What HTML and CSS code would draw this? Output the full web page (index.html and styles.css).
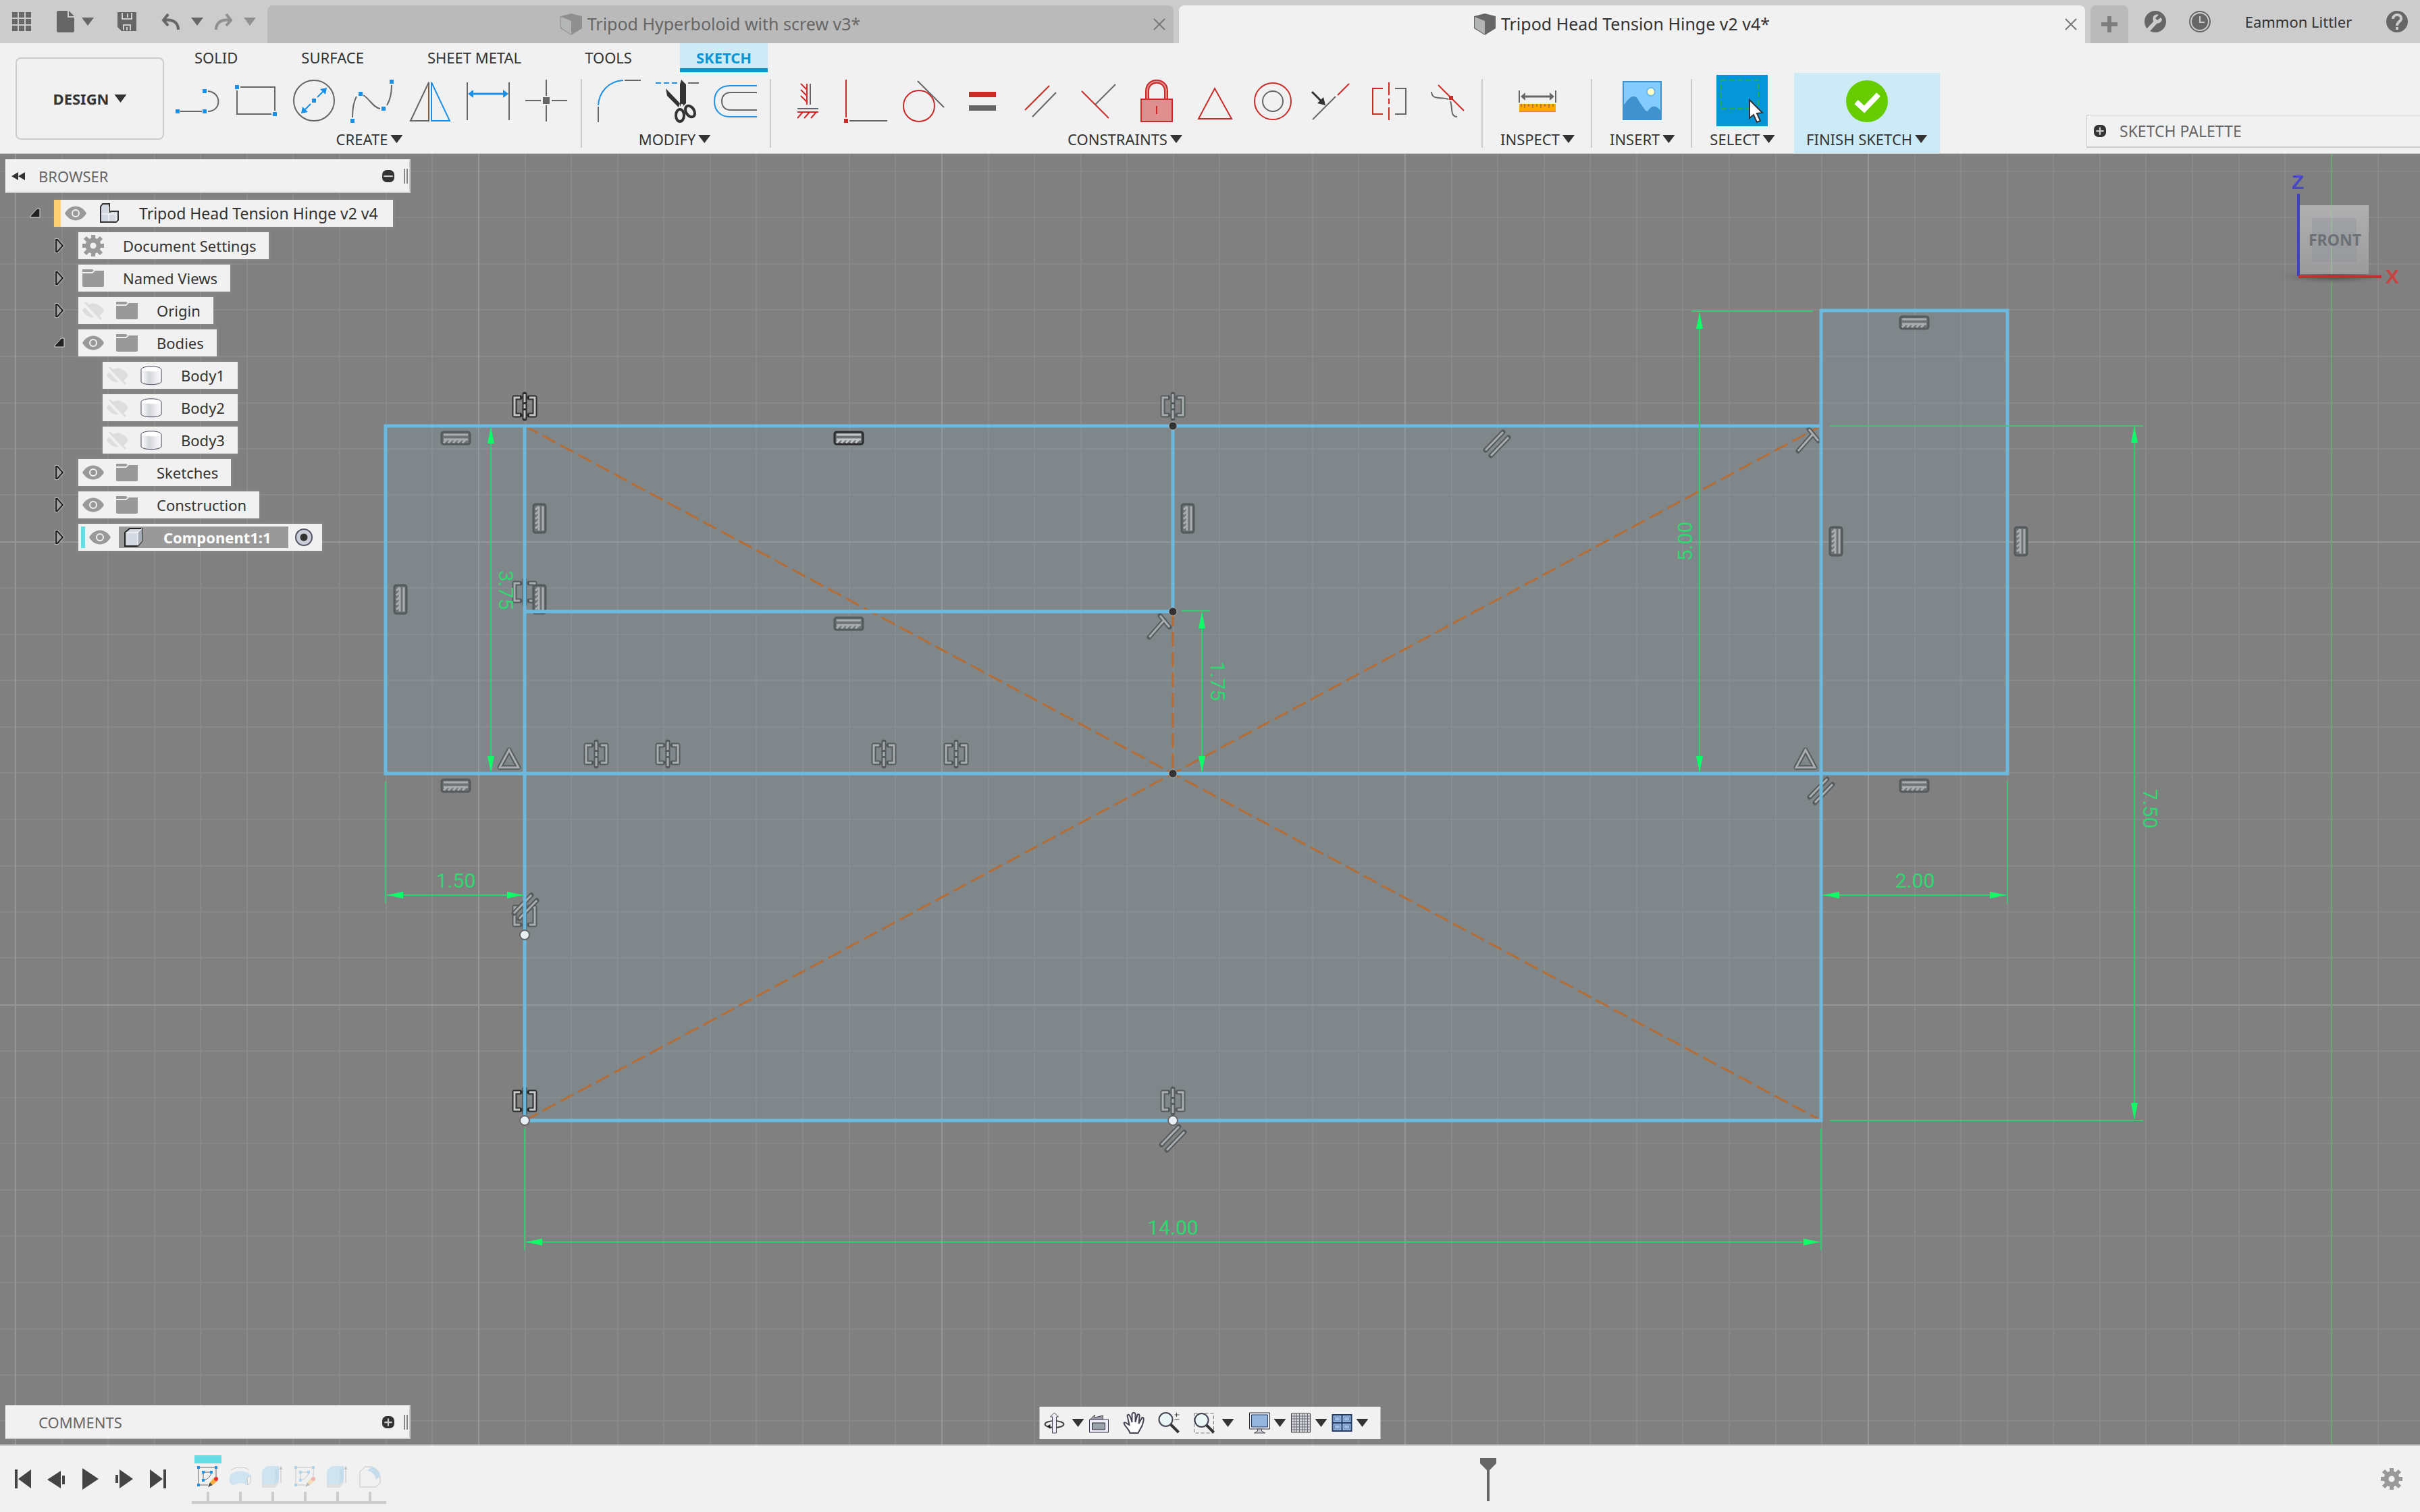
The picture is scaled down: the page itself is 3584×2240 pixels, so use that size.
FILE: index.html
```html
<!DOCTYPE html>
<html lang="en">
<head>
  <meta charset="UTF-8">
  <meta name="viewport" content="width=device-width, initial-scale=1.0">
  <title>Tripod Head Tension Hinge v2 v4*</title>
  <link rel="stylesheet" href="styles.css">
</head>
<body>
  <!-- shared icons -->
  <svg class="sprite" width="0" height="0" aria-hidden="true">
    <defs>
      <symbol id="i-eye" viewBox="0 0 32 32">
        <path d="M0 16C8 2 24 2 32 16C24 30 8 30 0 16Z" fill="#999"/>
        <circle cx="16" cy="16" r="5" fill="none" stroke="#f1f1f1" stroke-width="2"/>
      </symbol>
      <symbol id="i-eye-off" viewBox="0 0 32 32">
        <path d="M0 16C8 2 24 2 32 16C24 30 8 30 0 16Z" fill="#ddd"/>
        <path d="M2 5L26 31" stroke="#f1f1f1" stroke-width="6"/>
        <path d="M4 4L28 29" stroke="#ddd" stroke-width="3"/>
      </symbol>
      <symbol id="i-folder" viewBox="0 0 32 32">
        <path d="M0 3H15L17 5L14 7H0ZM0 9H15L19 5H32V27Q32 29 30 29H2Q0 29 0 27Z" fill="#999"/>
      </symbol>
      <symbol id="i-gear" viewBox="0 0 32 32">
        <g fill="none" stroke="currentColor">
          <circle cx="16" cy="16" r="8" stroke-width="7"/>
          <path d="M16 0V6M16 26V32M0 16H6M26 16H32M4 4L9 9M23 23L28 28M28 4L23 9M9 23L4 28" stroke-width="6"/>
        </g>
      </symbol>
      <symbol id="i-body" viewBox="0 0 32 32">
        <path d="M1 8V26C5 31 27 31 31 26V8Z" fill="url(#metal)" stroke="#445" stroke-width="1"/>
        <path d="M1 8C1 1 31 1 31 8C31 11 1 11 1 8Z" fill="#fff"/>
        <path d="M1 8C1 1 31 1 31 8" fill="none" stroke="#445" stroke-width="1"/>
      </symbol>
      <symbol id="i-component" viewBox="0 0 32 32">
        <path d="M3 9L10 3H28V22L22 29H3Z" fill="#d5d9e2" stroke="#222" stroke-width="2"/>
        <path d="M22 9L28 3V22L22 29Z" fill="#a9aebb"/>
        <path d="M4 9H22V28M22 9L28 3" fill="none" stroke="#fff" stroke-width="1"/>
      </symbol>
      <symbol id="i-closed" viewBox="0 0 24 24">
        <path d="M7 3H9L17 12L9 21H7Z" fill="none" stroke="#bbb" stroke-width="4"/>
        <path d="M7 3H9L17 12L9 21H7Z" fill="#a0a0a0" stroke="#222" stroke-width="2"/>
      </symbol>
      <symbol id="i-open" viewBox="0 0 24 24">
        <path d="M5 18V16L15 5H19V18Z" fill="#222" stroke="#ddd" stroke-width="1"/>
      </symbol>
      <symbol id="i-doc" viewBox="0 0 32 32">
        <path d="M0 4L16 0L32 4V22L16 32L0 22Z" fill="#666"/>
        <path d="M1 5L16 11V31L1 21Z" fill="#b2b4b4"/>
      </symbol>
      <symbol id="i-plus" viewBox="0 0 16 16">
        <rect width="16" height="16" rx="6" fill="#333"/>
        <path d="M8 3V13M3 8H13" stroke="#ccc" stroke-width="2"/>
      </symbol>
      <symbol id="i-minus" viewBox="0 0 16 16">
        <rect width="16" height="16" rx="6" fill="#333"/>
        <path d="M2 8H14" stroke="#ccc" stroke-width="2"/>
      </symbol>
      <symbol id="i-sketch" viewBox="0 0 32 32">
        <path d="M2 2H28V20M2 2V28H16" fill="none" stroke="#666" stroke-width="1"/>
        <path d="M9 9H21C21 14 16 20 9 21Z" fill="none" stroke="#666" stroke-width="1"/>
        <path d="M0 0h4v4h-4zM26 0h4v4h-4zM0 26h4v4h-4zM7 7h4v4h-4zM19 7h4v4h-4zM7 19h4v4h-4z" fill="#1a90e6"/>
        <path d="M16 31L19 24L23 28Z" fill="#444"/>
        <path d="M19 24L25 17L30 22L23 28Z" fill="#f5ae3d"/>
        <circle cx="28" cy="19" r="3" fill="#f03030"/>
      </symbol>
      <symbol id="i-extrude" viewBox="0 0 32 32">
        <path d="M0 27H19L25 21V25L19 32H0Z" fill="#bbb"/>
        <path d="M0 6L7 0H25V21L19 27H0Z" fill="#86c5ee"/>
        <path d="M19 6L25 0V21L19 27Z" fill="#62aee2"/>
        <path d="M28 26V3" stroke="#666" stroke-width="1"/>
        <path d="M28 0L31 5H25Z" fill="#666"/>
      </symbol>

      <!-- constraint glyphs on the canvas, each centred on 0,0 -->
      <g id="g-sym">
        <path class="rim" d="M-7 -13H-15V13H-7M7 -13H15V13H7M0 -18V18"/>
        <path class="ink" d="M-7 -13H-15V13H-7M7 -13H15V13H7"/>
        <path class="ink" d="M0 -18V18" stroke-dasharray="12 3 6 3"/>
      </g>
      <g id="g-hor">
        <rect class="plate" x="-21" y="-9" width="42" height="18" rx="3"/>
        <path class="ink" d="M-18 -5H18M-18 2H18M-18 7L-13 2M-11 7L-6 2M-4 7L1 2M3 7L8 2M10 7L15 2"/>
      </g>
      <g id="g-ver">
        <rect class="plate" x="-9" y="-21" width="18" height="42" rx="3"/>
        <path class="ink" d="M5 -18V18M-1 -18V18M-6 -13L-1 -18M-6 -6L-1 -11M-6 1L-1 -4M-6 8L-1 3M-6 15L-1 10"/>
      </g>
      <g id="g-par">
        <path class="rim" d="M-17 10L9 -17M-9 18L17 -9"/>
        <path class="ink" d="M-17 10L9 -17M-9 18L17 -9"/>
      </g>
      <g id="g-perp">
        <path class="rim" d="M-14 16L8 -9M2 -16L16 1"/>
        <path class="ink" d="M-14 16L8 -9M2 -16L16 1"/>
      </g>
      <g id="g-tri">
        <path class="rim" d="M-14 13L0 -13L14 13Z"/>
        <path class="ink" d="M-14 13L0 -13L14 13Z"/>
      </g>

      <linearGradient id="metal">
        <stop offset="0" stop-color="#fff"/><stop offset=".4" stop-color="#d4d6dc"/><stop offset="1" stop-color="#fff"/>
      </linearGradient>
      <linearGradient id="cube-face" x2="0" y2="1">
        <stop offset="0" stop-color="#b0b0b0"/><stop offset="1" stop-color="#9b9b9b"/>
      </linearGradient>
      <radialGradient id="cube-shadow">
        <stop offset="0" stop-color="#444"/><stop offset="1" stop-color="#808080" stop-opacity="0"/>
      </radialGradient>
      <pattern id="grid" x="22" y="116" width="686" height="686" patternUnits="userSpaceOnUse">
        <path d="M70 0V686M138 0V686M207 0V686M275 0V686M344 0V686M412 0V686M481 0V686M550 0V686M618 0V686M0 69H686M0 138H686M0 206H686M0 275H686M0 343H686M0 412H686M0 481H686M0 549H686M0 617H686" stroke="#898989" stroke-width="2"/>
        <path d="M1 0V686M0 1H686" stroke="#979797" stroke-width="2"/>
      </pattern>
      <marker id="arrow" viewBox="0 0 24 10" refX="24" refY="5" markerWidth="24" markerHeight="10" markerUnits="userSpaceOnUse" orient="auto-start-reverse">
        <path d="M0 0L24 5L0 10Z" fill="#0dff68"/>
      </marker>
    </defs>
  </svg>

  <header class="titlebar">
    <div class="quick">
      <button aria-label="Data panel"><svg viewBox="0 0 32 32"><path d="M2 2h8v8H2zM12 2h8v8h-8zM22 2h8v8h-8zM2 12h8v8H2zM12 12h8v8h-8zM22 12h8v8h-8zM2 22h8v8H2zM12 22h8v8h-8zM22 22h8v8h-8z" fill="#666"/></svg></button>
      <div class="pair">
        <button aria-label="File"><svg viewBox="0 0 32 32"><path d="M5 0H19V10H29V30Q29 32 27 32H5Q3 32 3 30V2Q3 0 5 0ZM21 0L29 8H21Z" fill="#666"/></svg></button>
        <span class="caret mid"></span>
      </div>
      <button aria-label="Save"><svg viewBox="0 0 32 32"><path d="M2 2H30V30H8L2 24Z" fill="#666"/><path d="M9 3V12H23V3M17 4V10M11 29V21H21V29M16 24V29" fill="none" stroke="#ccc" stroke-width="2"/></svg></button>
      <div class="pair history">
        <button aria-label="Undo"><svg viewBox="0 0 32 32"><path d="M12 5L5 14L12 22M6 14C20 12 27 18 27 28" fill="none" stroke="#666" stroke-width="4"/></svg></button>
        <span class="caret mid"></span>
        <button aria-label="Redo" disabled><svg viewBox="0 0 32 32"><path d="M20 5L27 14L20 22M26 14C12 12 5 18 5 28" fill="none" stroke="#909090" stroke-width="4"/></svg></button>
        <span class="caret light"></span>
      </div>
    </div>
    <div class="doc-tabs">
      <div class="doc-tab">
        <span class="doc-name"><svg class="faded" viewBox="0 0 32 32"><use href="#i-doc"/></svg>Tripod Hyperboloid with screw v3*</span>
        <button class="close" aria-label="Close tab"><svg viewBox="0 0 18 18"><path d="M1 1L17 17M17 1L1 17"/></svg></button>
      </div>
      <div class="doc-tab active">
        <span class="doc-name"><svg viewBox="0 0 32 32"><use href="#i-doc"/></svg>Tripod Head Tension Hinge v2 v4*</span>
        <button class="close" aria-label="Close tab"><svg viewBox="0 0 18 18"><path d="M1 1L17 17M17 1L1 17"/></svg></button>
      </div>
      <button class="new-tab" aria-label="New design"><svg viewBox="0 0 24 24"><path d="M12 0V24M0 12H24" stroke="#7d7d7d" stroke-width="6"/></svg></button>
    </div>
    <div class="account">
      <button aria-label="Extensions"><svg viewBox="0 0 32 32"><circle cx="16" cy="16" r="16" fill="#666"/><path d="M5 29L18 15" stroke="#ccc" stroke-width="6"/><path d="M24 10L19 14L16 11L21 6C14 4 11 10 13 15C16 20 24 20 26 13Z" fill="#ccc"/></svg></button>
      <button aria-label="Job status"><svg viewBox="0 0 32 32"><circle cx="16" cy="16" r="15" fill="none" stroke="#666" stroke-width="2"/><circle cx="16" cy="16" r="12" fill="#666"/><path d="M16 8V17H23" fill="none" stroke="#ccc" stroke-width="2"/></svg></button>
      <a class="user" href="#account">Eammon Littler</a>
      <button aria-label="Help"><svg viewBox="0 0 32 32"><circle cx="16" cy="16" r="16" fill="#666"/><path d="M10 12C10 4 23 4 22 12C22 16 16 16 16 22" fill="none" stroke="#ccc" stroke-width="4"/><path d="M14 24h4v4h-4z" fill="#ccc"/></svg></button>
    </div>
  </header>

  <div class="ribbon">
    <button class="workspace">DESIGN <span class="caret"></span></button>
    <div class="ribbon-main">
      <nav class="ribbon-tabs">
        <a href="#solid">SOLID</a>
        <a href="#surface">SURFACE</a>
        <a href="#sheet-metal">SHEET METAL</a>
        <a href="#tools">TOOLS</a>
        <a href="#sketch" class="active">SKETCH</a>
      </nav>
      <div class="groups">
        <section class="group">
          <div class="tools">
            <button aria-label="Line"><svg viewBox="0 0 64 64"><path class="gr" d="M6 48H38M47 18C68 20 67 48 47 48"/><path class="bf" d="M-1 45h6v6h-6zM39 45h6v6h-6zM39 15h6v6h-6z"/></svg></button>
            <button aria-label="Rectangle"><svg viewBox="0 0 64 64"><path class="gr" d="M9 12H60V47M4 17V52H55"/><path class="bf" d="M1 9h6v6h-6zM57 49h6v6h-6z"/></svg></button>
            <button aria-label="Circle"><svg viewBox="0 0 64 64"><circle class="gr" cx="32" cy="32" r="30"/><path class="bl" d="M37 27L46 18M27 37L18 46"/><path class="bf" d="M29 29h6v6h-6zM51 13L49 23L41 15ZM13 51L15 41L23 49Z"/></svg></button>
            <button aria-label="Spline"><svg viewBox="0 0 64 64"><path class="gr" d="M3 57C3 42 5 33 9 26M19 24C28 29 34 43 44 44M54 39C60 29 61 19 61 9"/><path class="bf" d="M0 59h6v6h-6zM12 19h6v6h-6zM46 41h6v6h-6zM58 1h6v6h-6z"/></svg></button>
            <button aria-label="Mirror"><svg viewBox="0 0 64 64"><path class="gr" d="M30 5V62H3Z"/><path class="bl" d="M34 5V62H61Z"/></svg></button>
            <button aria-label="Dimension"><svg viewBox="0 0 64 64"><path class="gr" d="M1 5V61M63 5V61"/><path class="bl thick" d="M8 22H56"/><path class="bf" d="M2 22L10 16V28ZM62 22L54 16V28Z"/></svg></button>
            <button aria-label="Point"><svg viewBox="0 0 64 64"><path class="gr" d="M1 32H24M40 32H63M32 1V25M32 39V63"/><path class="gf" d="M27 27h10v10h-10z"/></svg></button>
          </div>
          <button class="group-label">CREATE <span class="caret"></span></button>
        </section>
        <section class="group">
          <div class="tools">
            <button aria-label="Fillet"><svg viewBox="0 0 64 64"><path class="bl" d="M1 39C2 20 16 3 38 2"/><path class="gr" d="M40 2H64M1 41V64"/></svg></button>
            <button aria-label="Trim"><svg viewBox="0 0 64 64"><path class="bl" d="M0 6H32" stroke-dasharray="8 4"/><path class="gr" d="M48 6H64"/><path d="M38 1L45 8V36L40 41L36 40V8ZM15 14L36 36L34 42L17 25Z" fill="#333"/><ellipse cx="36" cy="54" rx="6" ry="9" fill="none" stroke="#333" stroke-width="4"/><ellipse cx="51" cy="48" rx="6" ry="9" transform="rotate(-32 51 48)" fill="none" stroke="#333" stroke-width="4"/><circle cx="39" cy="39" r="2" fill="#fff"/></svg></button>
            <button aria-label="Offset"><svg viewBox="0 0 64 64"><path class="bl" d="M64 10H24C9 10 1 20 1 33S9 56 24 56H64"/><path class="gr" d="M64 20H25C17 20 12 25 12 33S17 46 25 46H64"/></svg></button>
          </div>
          <button class="group-label">MODIFY <span class="caret"></span></button>
        </section>
        <section class="group">
          <div class="tools">
            <button aria-label="Horizontal/Vertical"><svg viewBox="0 0 64 64"><path class="rd" d="M30 7V38M21 7L30 16M21 16L30 25M21 25L30 34M16 49H47M16 58L24 49M26 58L34 49M36 58L44 49"/><path class="gr" d="M35 7V38M16 44H47"/></svg></button>
            <button aria-label="Coincident"><svg viewBox="0 0 64 64"><path class="rd" d="M2 1V57"/><path class="gr" d="M7 62H63"/><path class="rf" d="M-1 59h6v6h-6z"/></svg></button>
            <button aria-label="Tangent"><svg viewBox="0 0 64 64"><circle class="rd" cx="24" cy="40" r="23"/><path class="gr" d="M22 3L61 42"/></svg></button>
            <button aria-label="Equal"><svg viewBox="0 0 64 64"><path class="rf" d="M12 19h40v8h-40z"/><path class="gf" d="M12 39h40v8h-40z"/></svg></button>
            <button aria-label="Parallel"><svg viewBox="0 0 64 64"><path class="rd" d="M9 46L45 10"/><path class="gr" d="M20 56L55 20"/></svg></button>
            <button aria-label="Perpendicular"><svg viewBox="0 0 64 64"><path class="rd" d="M7 18L47 58"/><path class="gr" d="M27 38L57 8"/></svg></button>
            <button aria-label="Fix"><svg viewBox="0 0 64 64"><path d="M18 30V18C18 -1 46 -1 46 18V30" fill="none" stroke="#cc2927" stroke-width="6"/><path d="M18 30V18C18 -1 46 -1 46 18V30" fill="none" stroke="#df8f8f" stroke-width="2"/><path d="M9 30H55V63H9Z" fill="#df8f8f" stroke="#cc2927" stroke-width="2"/><path class="rd" d="M32 40V52"/></svg></button>
            <button aria-label="Equal length"><svg viewBox="0 0 64 64"><path class="rd" d="M8 59L32 14L57 59Z"/></svg></button>
            <button aria-label="Concentric"><svg viewBox="0 0 64 64"><circle class="rd" cx="32" cy="33" r="27"/><circle class="gr" cx="32" cy="33" r="15"/></svg></button>
            <button aria-label="Collinear"><svg viewBox="0 0 64 64"><path class="gr" d="M5 60L39 26"/><path class="rd" d="M42 24L59 7"/><path d="M4 19L18 33" stroke="#333" stroke-width="3"/><path d="M24 39L12 36L21 27Z" fill="#333"/></svg></button>
            <button aria-label="Symmetry"><svg viewBox="0 0 64 64"><path class="rd" d="M23 14H8V52H23M32 5V24M32 29V37M32 42V61"/><path class="gr" d="M41 14H57V52H41"/></svg></button>
            <button aria-label="Curvature"><svg viewBox="0 0 64 64"><path class="gr" d="M9 19C10 32 22 26 34 30M37 33C41 44 36 55 47 56"/><path class="rd" d="M19 9L57 47"/><path class="rf" d="M35 25h6v6h-6z"/></svg></button>
          </div>
          <button class="group-label">CONSTRAINTS <span class="caret"></span></button>
        </section>
        <section class="group single">
          <div class="tools">
            <button aria-label="Measure"><svg viewBox="0 0 64 64"><path class="gr" d="M5 17V35M59 17V35"/><path class="gr thick" d="M10 26H54"/><path class="gf" d="M7 26L14 20V32ZM57 26L50 20V32Z"/><path d="M5 37H59V49H5Z" fill="#ffa900"/><path d="M5 47H59V49H5Z" fill="#e09000"/><path d="M8 37V41M13 37V43M19 37V41M25 37V43M31 37V41M37 37V43M43 37V41M49 37V43M55 37V41" stroke="#665533" stroke-width="1"/></svg></button>
          </div>
          <button class="group-label">INSPECT <span class="caret"></span></button>
        </section>
        <section class="group single">
          <div class="tools">
            <button aria-label="Insert image"><svg viewBox="0 0 64 64"><path d="M4 4H60V60H4Z" fill="#84cbff" stroke="#3f92cd" stroke-width="2"/><path d="M4 40C15 22 23 22 28 34L37 47L40 48C46 38 53 38 60 48V61H4Z" fill="#3f92cd"/><circle cx="45" cy="19" r="6" fill="#ffffc8" stroke="#6eb9ee" stroke-width="2"/></svg></button>
          </div>
          <button class="group-label">INSERT <span class="caret"></span></button>
        </section>
        <section class="group single last">
          <div class="tools">
            <button class="selected" aria-label="Select"><svg viewBox="0 0 64 64"><path d="M1 2H56V44H1Z" fill="none" stroke="#1fae55" stroke-width="2" stroke-dasharray="8 4"/><path d="M43 31V58L49 53L54 64L59 62L54 51L62 50Z" fill="#fff" stroke="#333" stroke-width="2"/></svg></button>
          </div>
          <button class="group-label">SELECT <span class="caret"></span></button>
        </section>
        <section class="group finish">
          <div class="tools">
            <button aria-label="Finish sketch"><svg viewBox="0 0 64 64"><circle cx="32" cy="33" r="31" fill="#6c0"/><path d="M16 34L28 45L49 23" fill="none" stroke="#fff" stroke-width="8"/></svg></button>
          </div>
          <button class="group-label">FINISH SKETCH <span class="caret"></span></button>
        </section>
      </div>
    </div>
    <aside class="palette">
      <button aria-label="Expand sketch palette"><svg viewBox="0 0 16 16"><use href="#i-plus"/></svg></button>
      SKETCH PALETTE
    </aside>
  </div>

  <main class="viewport">
    <svg class="canvas" viewBox="0 228 3584 1912" preserveAspectRatio="xMidYMid slice">
      <rect y="228" width="3584" height="1912" fill="#808080"/>
      <rect y="228" width="3584" height="1912" fill="url(#grid)"/>
      <path d="M3453 228V2140" stroke="#62a866" stroke-opacity=".7" stroke-width="2"/>

      <path d="M571 631H2697V460H2973V1146H2697V1660H777V1146H571Z" fill="#7aa0ae" fill-opacity=".22"/>

      <g class="construction">
        <path d="M777 631L1737 1146L2697 1660"/>
        <path d="M777 1660L1737 1146L2697 631"/>
        <path d="M1737 906V1146"/>
      </g>

      <g class="glyphs">
        <use href="#g-sym" x="1737" y="602"/>
        <use href="#g-sym" x="883" y="1117"/>
        <use href="#g-sym" x="989" y="1117"/>
        <use href="#g-sym" x="1309" y="1117"/>
        <use href="#g-sym" x="1416" y="1117"/>
        <use href="#g-sym" x="777" y="877"/>
        <use href="#g-sym" x="777" y="1357"/>
        <use href="#g-sym" x="1737" y="1631"/>
        <use href="#g-hor" x="675" y="649"/>
        <use href="#g-hor" x="675" y="1164"/>
        <use href="#g-hor" x="1257" y="924"/>
        <use href="#g-hor" x="2835" y="478"/>
        <use href="#g-hor" x="2835" y="1164"/>
        <use href="#g-ver" x="593" y="888"/>
        <use href="#g-ver" x="799" y="768"/>
        <use href="#g-ver" x="799" y="888"/>
        <use href="#g-ver" x="1759" y="768"/>
        <use href="#g-ver" x="2719" y="802"/>
        <use href="#g-ver" x="2993" y="802"/>
        <use href="#g-par" x="2217" y="657"/>
        <use href="#g-par" x="2697" y="1171"/>
        <use href="#g-par" x="1737" y="1686"/>
        <use href="#g-par" x="778" y="1343"/>
        <use href="#g-perp" x="1716" y="928"/>
        <use href="#g-perp" x="2677" y="652"/>
        <use href="#g-tri" x="754" y="1124"/>
        <use href="#g-tri" x="2674" y="1124"/>
      </g>
      <g class="glyphs strong">
        <use href="#g-sym" x="777" y="602"/>
        <use href="#g-sym" x="777" y="1631"/>
        <use href="#g-hor" x="1257" y="649"/>
      </g>

      <g class="profile">
        <path d="M777 631H571V1146H2973V460H2697V1660H777V631H2697"/>
        <path d="M777 906H1737V631"/>
      </g>

      <g class="extension">
        <path d="M571 1158V1338M2973 1158V1338M777 1672V1852M2697 1672V1852"/>
        <path d="M1750 905H1792M2505 461H2685M2710 631H3174M2710 1660H3174"/>
      </g>
      <g class="dimension">
        <path d="M727 633V1144"/>
        <path d="M1780 907V1144"/>
        <path d="M2517 463V1144"/>
        <path d="M3161 632V1658"/>
        <path d="M573 1326H775"/>
        <path d="M2700 1326H2971"/>
        <path d="M779 1840H2695"/>
      </g>
      <g class="dim-text">
        <text transform="translate(739 874) rotate(90)">3.75</text>
        <text transform="translate(1793 1009) rotate(90)">1.75</text>
        <text transform="translate(2506 802) rotate(-90)">5.00</text>
        <text transform="translate(3174 1198) rotate(90)">7.50</text>
        <text x="675" y="1315">1.50</text>
        <text x="2836" y="1315">2.00</text>
        <text x="1737" y="1829">14.00</text>
      </g>

      <g fill="#333" stroke="#aaa" stroke-width="1">
        <circle cx="1737" cy="631" r="6"/>
        <circle cx="1737" cy="906" r="6"/>
        <circle cx="1737" cy="1146" r="6"/>
      </g>
      <g fill="#e8eff4" stroke="#666" stroke-width="2">
        <circle cx="777" cy="1385" r="7"/>
        <circle cx="777" cy="1660" r="7"/>
        <circle cx="1737" cy="1660" r="7"/>
      </g>

      <!-- view cube -->
      <g class="viewcube">
        <ellipse cx="3456" cy="410" rx="90" ry="12" fill="url(#cube-shadow)"/>
        <rect x="3406" y="304" width="102" height="102" fill="url(#cube-face)"/>
        <rect x="3424" y="323" width="66" height="65" fill="#8c9098" fill-opacity=".35"/>
        <path d="M3453 304V406" stroke="#9cc29f" stroke-width="2" stroke-opacity=".6"/>
        <text class="face" x="3458" y="364">FRONT</text>
        <path d="M3404 287V409" stroke="#4141c4" stroke-width="4"/>
        <path d="M3404 410H3527" stroke="#c03030" stroke-width="4"/>
        <text x="3403" y="280" fill="#4848c4">Z</text>
        <text x="3543" y="420" fill="#c84444">X</text>
      </g>
    </svg>

    <div class="browser">
      <div class="panel-bar">
        <button aria-label="Collapse"><svg class="rewind" viewBox="0 0 20 16"><path d="M10 2V14L0 8ZM20 2V14L10 8Z" fill="#333"/></svg></button>
        <span class="panel-title">BROWSER</span>
        <button aria-label="Minimize"><svg class="dot" viewBox="0 0 16 16"><use href="#i-minus"/></svg></button>
        <span class="grip"></span>
      </div>
      <ul class="tree">
        <li class="lv1">
          <button class="toggle" aria-label="Collapse"><svg viewBox="0 0 24 24"><use href="#i-open"/></svg></button>
          <div class="node root">
            <svg viewBox="0 0 32 32"><use href="#i-eye"/></svg>
            <svg viewBox="0 0 32 32"><path d="M3 6L6 2H16V14L19 13H29V26L26 29H3Z" fill="#d5d9e2" stroke="#333" stroke-width="2"/><path d="M4 17H15V28M15 17H26V28M15 6V17" fill="none" stroke="#fff" stroke-width="1"/></svg>
            <span>Tripod Head Tension Hinge v2 v4</span>
          </div>
        </li>
        <li class="lv2">
          <button class="toggle" aria-label="Expand"><svg viewBox="0 0 24 24"><use href="#i-closed"/></svg></button>
          <div class="node"><svg class="gear" viewBox="0 0 32 32"><use href="#i-gear"/></svg><span>Document Settings</span></div>
        </li>
        <li class="lv2">
          <button class="toggle" aria-label="Expand"><svg viewBox="0 0 24 24"><use href="#i-closed"/></svg></button>
          <div class="node"><svg viewBox="0 0 32 32"><use href="#i-folder"/></svg><span>Named Views</span></div>
        </li>
        <li class="lv2">
          <button class="toggle" aria-label="Expand"><svg viewBox="0 0 24 24"><use href="#i-closed"/></svg></button>
          <div class="node"><svg viewBox="0 0 32 32"><use href="#i-eye-off"/></svg><svg viewBox="0 0 32 32"><use href="#i-folder"/></svg><span>Origin</span></div>
        </li>
        <li class="lv2">
          <button class="toggle" aria-label="Collapse"><svg viewBox="0 0 24 24"><use href="#i-open"/></svg></button>
          <div class="node"><svg viewBox="0 0 32 32"><use href="#i-eye"/></svg><svg viewBox="0 0 32 32"><use href="#i-folder"/></svg><span>Bodies</span></div>
        </li>
        <li class="lv3">
          <div class="node"><svg viewBox="0 0 32 32"><use href="#i-eye-off"/></svg><svg viewBox="0 0 32 32"><use href="#i-body"/></svg><span>Body1</span></div>
        </li>
        <li class="lv3">
          <div class="node"><svg viewBox="0 0 32 32"><use href="#i-eye-off"/></svg><svg viewBox="0 0 32 32"><use href="#i-body"/></svg><span>Body2</span></div>
        </li>
        <li class="lv3">
          <div class="node"><svg viewBox="0 0 32 32"><use href="#i-eye-off"/></svg><svg viewBox="0 0 32 32"><use href="#i-body"/></svg><span>Body3</span></div>
        </li>
        <li class="lv2">
          <button class="toggle" aria-label="Expand"><svg viewBox="0 0 24 24"><use href="#i-closed"/></svg></button>
          <div class="node"><svg viewBox="0 0 32 32"><use href="#i-eye"/></svg><svg viewBox="0 0 32 32"><use href="#i-folder"/></svg><span>Sketches</span></div>
        </li>
        <li class="lv2">
          <button class="toggle" aria-label="Expand"><svg viewBox="0 0 24 24"><use href="#i-closed"/></svg></button>
          <div class="node"><svg viewBox="0 0 32 32"><use href="#i-eye"/></svg><svg viewBox="0 0 32 32"><use href="#i-folder"/></svg><span>Construction</span></div>
        </li>
        <li class="lv2">
          <button class="toggle" aria-label="Expand"><svg viewBox="0 0 24 24"><use href="#i-closed"/></svg></button>
          <div class="node component">
            <svg viewBox="0 0 32 32"><use href="#i-eye"/></svg>
            <label class="picked" for="activate"><svg viewBox="0 0 32 32"><use href="#i-component"/></svg><span>Component1:1</span></label>
            <input type="radio" id="activate" name="active" checked>
          </div>
        </li>
      </ul>
    </div>

    <div class="comments panel-bar">
      <span class="panel-title">COMMENTS</span>
      <button aria-label="Expand comments"><svg class="dot" viewBox="0 0 16 16"><use href="#i-plus"/></svg></button>
      <span class="grip"></span>
    </div>

    <div class="navbar">
      <button class="drop" aria-label="Orbit"><svg viewBox="0 0 32 32"><ellipse cx="16" cy="18" rx="14" ry="5" fill="none" stroke="#444" stroke-width="2"/><path d="M13 31V7H10L16 1L22 7H19V31Z" fill="#eef" stroke="#444"/><path d="M5 21L10 18V25Z" fill="#222"/></svg></button>
      <span class="caret"></span>
      <button aria-label="Look at"><svg viewBox="0 0 32 32"><path d="M3 11L10 4V8L22 5V11" fill="#99a" stroke="#444"/><path d="M2 11H30V30H2Z" fill="#eef" stroke="#334"/><path d="M6 16H25V26H6Z" fill="#9aa2ab" stroke="#222"/></svg></button>
      <button aria-label="Pan"><svg viewBox="0 0 32 32"><path d="M10 31C8 24 1 20 1 16C4 14 6 18 9 19L6 5C8 2 10 4 13 15V3C14 0 17 0 18 3V15L21 4C23 2 25 4 24 7L23 17L28 8C31 8 31 10 28 20L22 31Z" fill="#fff" stroke="#445" stroke-width="2"/></svg></button>
      <button aria-label="Zoom"><svg viewBox="0 0 32 32"><path d="M18 18L30 30" stroke="#333" stroke-width="4"/><circle cx="11" cy="11" r="10" fill="#eaf6f5" stroke="#445" stroke-width="2"/><path d="M24 4H31M27 1V7M24 11H31" stroke="#444"/></svg></button>
      <button class="drop" aria-label="Zoom window"><svg viewBox="0 0 32 32"><path d="M1 2H30V31H1Z" fill="none" stroke="#777" stroke-dasharray="5 3"/><path d="M19 19L30 30" stroke="#333" stroke-width="4"/><circle cx="12" cy="12" r="10" fill="#eaf6f5" stroke="#445" stroke-width="2"/></svg></button>
      <span class="caret"></span>
      <button class="menu wide" aria-label="Display settings"><svg viewBox="0 0 32 32"><path d="M1 1H31V25H1Z" fill="#eef" stroke="#333"/><path d="M4 4H28V22H4Z" fill="#94b6dc" stroke="#223a66"/><path d="M13 25H19V28L24 31H8L13 28Z" fill="#ccd" stroke="#444"/></svg></button>
      <span class="caret"></span>
      <button class="menu" aria-label="Grid and snaps"><svg viewBox="0 0 32 32"><path d="M2 2H30V30H2Z" fill="#d8d9dd" stroke="#444"/><path d="M6 2V30M10 2V30M14 2V30M18 2V30M22 2V30M26 2V30M2 6H30M2 10H30M2 14H30M2 18H30M2 22H30M2 26H30" stroke="#667"/></svg></button>
      <span class="caret"></span>
      <button class="menu" aria-label="Viewports"><svg viewBox="0 0 32 32"><path d="M2 4H30V28H2Z" fill="#9dbce0" stroke="#223a66" stroke-width="2"/><path d="M5 7H13V13H5ZM19 7H27V13H19ZM5 19H13V25H5ZM19 19H27V25H19Z" fill="none" stroke="#5f83b8"/><path d="M16 4V28M2 16H30" stroke="#223a66" stroke-width="2"/></svg></button>
      <span class="caret"></span>
    </div>
  </main>

  <footer class="timeline">
    <div class="playback">
      <button aria-label="Go to start"><svg viewBox="0 0 32 32"><path d="M4 2H8V30H4ZM28 2V30L9 16Z"/></svg></button>
      <button aria-label="Step back"><svg viewBox="0 0 32 32"><path d="M2 17L22 4V30ZM24 11H28V24H24Z"/></svg></button>
      <button aria-label="Play"><svg viewBox="0 0 32 32"><path d="M4 0L28 16L4 32Z"/></svg></button>
      <button aria-label="Step forward"><svg viewBox="0 0 32 32"><path d="M3 10H7V22H3ZM9 2L29 16L9 30Z"/></svg></button>
      <button aria-label="Go to end"><svg viewBox="0 0 32 32"><path d="M24 2H28V30H24ZM4 2V30L23 16Z"/></svg></button>
    </div>
    <div class="features">
      <button class="feature current" aria-label="Sketch1"><svg viewBox="0 0 32 32"><use href="#i-sketch"/></svg></button>
      <button class="feature" aria-label="Revolve1"><svg viewBox="0 0 32 32"><path d="M2 6C10 0 22 0 29 6" fill="none" stroke="#666"/><path d="M0 14C8 5 24 5 32 14L26 29C20 24 12 24 6 29L0 25Z" fill="#86c5ee"/><path d="M26 18L31 14V24L27 28Z" fill="#fff" stroke="#666"/></svg></button>
      <button class="feature" aria-label="Extrude1"><svg viewBox="0 0 32 32"><use href="#i-extrude"/></svg></button>
      <button class="feature" aria-label="Sketch2"><svg viewBox="0 0 32 32"><use href="#i-sketch"/></svg></button>
      <button class="feature" aria-label="Extrude2"><svg viewBox="0 0 32 32"><use href="#i-extrude"/></svg></button>
      <button class="feature" aria-label="Fillet1"><svg viewBox="0 0 32 32"><path d="M1 8L9 1H18C27 4 31 10 31 18V25L24 31H1Z" fill="#eee" stroke="#666"/><path d="M12 7L18 1C27 4 31 10 31 15L25 20C24 14 20 8 12 7Z" fill="#62aee2"/></svg></button>
    </div>
    <svg class="playhead" viewBox="0 0 24 64"><path d="M0 0H24V8L14 18V64H10V18L0 8Z" fill="#666"/></svg>
    <button class="settings" aria-label="Timeline settings"><svg viewBox="0 0 32 32"><use href="#i-gear"/></svg></button>
  </footer>
</body>
</html>
```
FILE: styles.css
```css
* {
  box-sizing: border-box;
}
body {
  margin: 0;
  min-height: 100vh;
  display: flex;
  flex-direction: column;
  font-family: "Noto Sans", "Open Sans", sans-serif;
  font-size: 22px;
  line-height: 30px;
  color: #333;
  background: #f1f1f1;
}
button {
  display: flex;
  align-items: center;
  justify-content: center;
  padding: 0;
  border: none;
  background: none;
  font: inherit;
  color: inherit;
}
a {
  color: inherit;
  text-decoration: none;
}
svg {
  display: block;
  flex: none;
  width: 32px;
  height: 32px;
  overflow: visible;
}
.sprite {
  position: absolute;
  width: 0;
  height: 0;
}
.caret {
  width: 18px;
  height: 12px;
  background: #333;
  clip-path: polygon(0 0, 100% 0, 50% 100%);
}
.caret.mid {
  background: #666;
}
.caret.light {
  background: #909090;
}

/* title bar */
.titlebar {
  display: flex;
  height: 64px;
  background: #ccc;
}
.quick {
  display: flex;
  gap: 33px;
  width: 396px;
  padding-left: 16px;
  align-items: center;
}
.pair {
  display: flex;
  align-items: center;
  gap: 8px;
}
.history {
  gap: 14px;
}
.doc-tabs {
  display: flex;
  flex: 1;
  gap: 8px;
  padding-top: 8px;
}
.doc-tab {
  display: flex;
  flex: 1;
  align-items: center;
  padding-right: 12px;
  border-radius: 8px 8px 0 0;
  background: #bababa;
  color: #666;
  font-size: 25px;
}
.doc-tab.active {
  background: #f1f1f1;
  color: #333;
}
.doc-name {
  display: flex;
  flex: 1;
  gap: 8px;
  justify-content: center;
}
.faded {
  opacity: 0.5;
}
.close svg {
  width: 18px;
  height: 18px;
  stroke: #777;
  stroke-width: 2;
}
.new-tab {
  width: 56px;
  border-radius: 8px 8px 0 0;
  background: #bababa;
}
.new-tab svg {
  width: 24px;
  height: 24px;
}
.account {
  display: flex;
  align-items: center;
  width: 432px;
  padding: 0 18px 0 24px;
  gap: 34px;
}
.user {
  flex: 1;
  text-align: center;
}

/* ribbon */
.ribbon {
  display: flex;
  height: 164px;
  border-bottom: 1px solid #ccc;
}
.workspace {
  width: 220px;
  height: 122px;
  margin: 21px 7px 0 23px;
  gap: 8px;
  border: 2px solid #ccc;
  border-radius: 8px;
  font-weight: bold;
}
.ribbon-main {
  display: flex;
  flex-direction: column;
}
.ribbon-tabs {
  display: flex;
  height: 44px;
}
.ribbon-tabs a {
  padding: 6px 47px 0 47px;
}
.ribbon-tabs a:first-child {
  padding-left: 38px;
}
.ribbon-tabs a:nth-child(4) {
  margin-right: 24px;
}
.ribbon-tabs .active {
  padding: 6px 24px 0 24px;
  height: 43px;
  background: #cdebf6;
  border-bottom: 6px solid #0696d7;
  color: #0696d7;
  font-weight: bold;
}
.groups {
  display: flex;
  flex: 1;
}
.group {
  position: relative;
  padding: 3px 10px 0 12px;
}
.group:first-child {
  padding-left: 0;
}
.group::after {
  content: "";
  position: absolute;
  right: 0;
  top: 9px;
  width: 2px;
  height: 102px;
  background: #ccc;
}
.group.single {
  padding: 3px 26px 0 26px;
}
.group.last::after,
.group.finish::after {
  display: none;
}
.tools {
  display: flex;
  justify-content: center;
}
.tools button {
  width: 86px;
  height: 76px;
}
.tools svg {
  width: 64px;
  height: 64px;
}
.tools .selected {
  width: 76px;
  background: #0696d7;
}
.group-label {
  width: 100%;
  margin-top: 4px;
  padding-right: 8px;
  gap: 4px;
  white-space: nowrap;
}
.single .group-label,
.finish .group-label {
  padding-right: 0;
}
.group.finish {
  width: 216px;
  margin-left: 2px;
  padding: 3px 0 0 0;
  background: #cdebf6;
}
.gr, .bl, .rd {
  fill: none;
  stroke-width: 2;
}
.gr { stroke: #666; }
.bl { stroke: #1a90e6; }
.rd { stroke: #cc2927; }
.gf { fill: #666; }
.bf { fill: #1a90e6; }
.rf { fill: #cc2927; }
.thick { stroke-width: 3; }

.palette {
  display: flex;
  align-items: center;
  align-self: flex-end;
  width: 494px;
  height: 49px;
  margin: 0 0 8px auto;
  padding-left: 10px;
  gap: 20px;
  border: 1px solid #ccc;
  border-bottom-width: 2px;
  border-right: none;
  color: #666;
  font-size: 23px;
}
.palette svg,
.dot {
  width: 18px;
  height: 18px;
}

/* canvas */
.viewport {
  position: relative;
  flex: 1;
  overflow: hidden;
  background: #808080;
}
.canvas {
  position: absolute;
  width: 100%;
  height: 100%;
}
.construction path {
  fill: none;
  stroke: #b46d36;
  stroke-width: 3;
  stroke-dasharray: 22 8;
}
.profile path {
  fill: none;
  stroke: #6bb9df;
  stroke-width: 5;
}
.extension path {
  stroke: #3fc574;
  stroke-width: 2;
}
.dimension path {
  stroke: #2cd36d;
  stroke-width: 2;
  marker-start: url(#arrow);
  marker-end: url(#arrow);
}
.dim-text text {
  font-family: Roboto, sans-serif;
  font-size: 30px;
  text-anchor: middle;
  fill: #2fd870;
}
.glyphs {
  --rim: #555b5d;
  --ink: #a9adaf;
}
.strong {
  --rim: #2b2d2e;
  --ink: #c4c6c7;
}
.rim {
  fill: none;
  stroke: var(--rim);
  stroke-width: 7;
  stroke-linejoin: round;
  stroke-linecap: round;
}
.ink {
  fill: none;
  stroke: var(--ink);
  stroke-width: 3;
}
.plate {
  fill: #6d7274;
  stroke: var(--rim);
  stroke-width: 3;
}
.viewcube text {
  font-family: "Liberation Sans", sans-serif;
  font-size: 30px;
  font-weight: bold;
  text-anchor: middle;
}
.viewcube .face {
  font-family: "Open Sans", sans-serif;
  font-size: 23px;
  fill: #6b7076;
}

/* side panels */
.panel-bar {
  display: flex;
  align-items: center;
  width: 600px;
  height: 50px;
  padding: 0 2px 0 8px;
  background: #f1f1f1;
  border: 1px solid #fff;
  border-right: 2px solid #ccc;
  border-bottom: 2px solid #ccc;
  color: #666;
}
.rewind {
  width: 20px;
  height: 16px;
}
.panel-title {
  flex: 1;
  margin-left: 20px;
}
.comments .panel-title {
  margin-left: 40px;
}
.grip {
  width: 6px;
  height: 22px;
  margin-left: 14px;
  border-left: 2px solid #888;
  border-right: 2px solid #888;
}
.browser {
  position: absolute;
  left: 8px;
  top: 8px;
}
.comments {
  position: absolute;
  left: 8px;
  bottom: 8px;
}
.tree {
  display: flex;
  flex-direction: column;
  gap: 8px;
  margin: 10px 0 0 0;
  padding: 0;
  list-style: none;
}
.tree li {
  display: flex;
}
.lv1 { padding-left: 32px; }
.lv2 { padding-left: 68px; }
.lv3 { padding-left: 144px; }
.toggle {
  width: 40px;
  justify-content: flex-start;
}
.toggle svg {
  width: 24px;
  height: 24px;
}
.node {
  display: flex;
  align-items: center;
  height: 40px;
  padding: 0 19px 0 6px;
  background: #f1f1f1;
  box-shadow: 0 0 0 3px rgba(255, 255, 255, 0.03);
}
.node svg + svg {
  margin-left: 18px;
}
.node span {
  margin-left: 28px;
}
.node.root {
  padding-right: 22px;
  border-left: 10px solid #ffd173;
  font-size: 23px;
}
.gear,
.settings {
  color: #999;
}
.node.component {
  padding: 0 14px 0 4px;
}
.component::before {
  content: "";
  width: 6px;
  height: 32px;
  margin-right: 6px;
  background: #64dde3;
}
.picked {
  display: flex;
  align-items: center;
  height: 32px;
  margin-left: 12px;
  padding: 0 25px 0 6px;
  background: #999;
  color: #fff;
  font-weight: bold;
}
.component input {
  appearance: none;
  width: 26px;
  height: 26px;
  margin: 0 0 0 10px;
  border: 2px solid #556;
  border-radius: 50%;
  background: radial-gradient(circle, #333 5px, #c9ced9 6px);
}

.navbar {
  position: absolute;
  left: 50%;
  bottom: 8px;
  display: flex;
  align-items: center;
  height: 48px;
  padding: 0 18px 0 6px;
  background: #f1f1f1;
  transform: translateX(-50%);
}
.navbar button {
  margin-right: 20px;
}
.navbar .drop {
  margin-right: 10px;
}
.navbar .menu {
  margin-right: 5px;
}
.navbar .caret {
  margin-right: 6px;
}
.navbar .caret:last-child {
  margin-right: 0;
}
.navbar .wide {
  margin-left: 16px;
}

/* timeline */
.timeline {
  display: flex;
  height: 100px;
  padding: 0 26px 0 18px;
  border-top: 2px solid #ccc;
}
.playback {
  display: flex;
  gap: 18px;
  fill: #444;
}
.features {
  display: flex;
  align-self: flex-start;
  margin-left: 34px;
}
.feature {
  position: relative;
  flex-direction: column;
  width: 48px;
  padding-top: 30px;
}
.feature svg {
  opacity: 0.3;
}
.feature.current svg {
  opacity: 1;
}
.feature.current::before {
  content: "";
  position: absolute;
  top: 14px;
  left: 4px;
  width: 40px;
  height: 12px;
  background: #64dde3;
}
/* tick and its stretch of the track */
.feature::after {
  content: "";
  width: 48px;
  height: 14px;
  margin-top: 6px;
  border-bottom: 4px solid #ccc;
  background: linear-gradient(#ccc, #ccc) center / 4px 100% no-repeat;
}
.playhead {
  width: 24px;
  height: 64px;
  margin: 18px 0 0 1620px;
}
.settings {
  margin-left: auto;
}
```
